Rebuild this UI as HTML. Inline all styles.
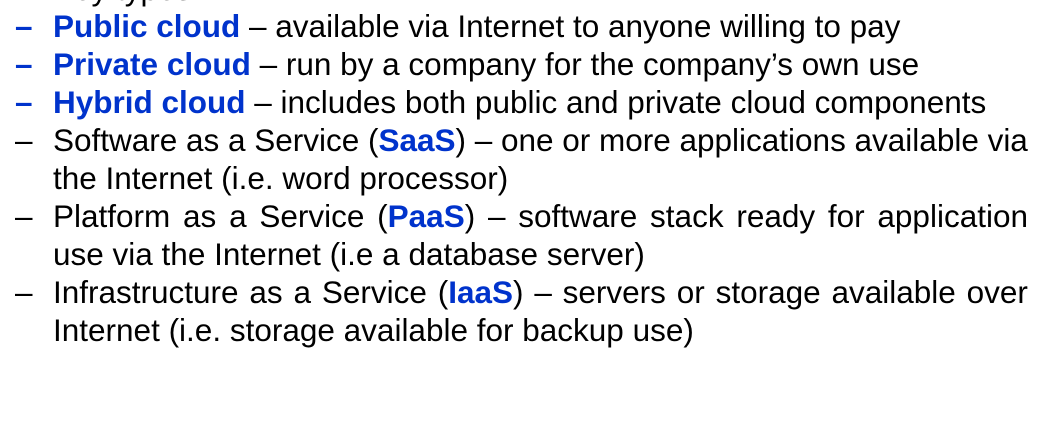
<!DOCTYPE html>
<html><head><meta charset="utf-8"><style>
html,body{margin:0;padding:0;background:#fff;width:1060px;height:440px;overflow:hidden;position:relative}
.l{position:absolute;left:53px;width:975px;font-family:"Liberation Sans",Arial,sans-serif;font-size:31.5px;line-height:38px;color:#000;white-space:nowrap}
.j{display:flex;justify-content:space-between}
.d{position:absolute;left:15px;font-family:"Liberation Sans",Arial,sans-serif;font-size:31.5px;line-height:38px}
.b{color:#0033cc;font-weight:bold}
</style></head><body>
<div class="l" style="top:-30px">Key types</div>
<div class="d b" style="top:7px">–</div><div class="l" style="top:7px"><span class="b">Public cloud</span> – available via Internet to anyone willing to pay</div>
<div class="d b" style="top:45px">–</div><div class="l" style="top:45px"><span class="b">Private cloud</span> – run by a company for the company’s own use</div>
<div class="d b" style="top:83px">–</div><div class="l" style="top:83px"><span class="b">Hybrid cloud</span> – includes both public and private cloud components</div>
<div class="d" style="top:121px">–</div><div class="l j" style="top:121px"><span>Software</span><span>as</span><span>a</span><span>Service</span><span>(<span class="b">SaaS</span>)</span><span>–</span><span>one</span><span>or</span><span>more</span><span>applications</span><span>available</span><span>via</span></div>
<div class="l" style="top:159px">the Internet (i.e. word processor)</div>
<div class="d" style="top:197px">–</div><div class="l j" style="top:197px"><span>Platform</span><span>as</span><span>a</span><span>Service</span><span>(<span class="b">PaaS</span>)</span><span>–</span><span>software</span><span>stack</span><span>ready</span><span>for</span><span>application</span></div>
<div class="l" style="top:235px">use via the Internet (i.e a database server)</div>
<div class="d" style="top:273px">–</div><div class="l j" style="top:273px"><span>Infrastructure</span><span>as</span><span>a</span><span>Service</span><span>(<span class="b">IaaS</span>)</span><span>–</span><span>servers</span><span>or</span><span>storage</span><span>available</span><span>over</span></div>
<div class="l" style="top:311px">Internet (i.e. storage available for backup use)</div>
</body></html>
